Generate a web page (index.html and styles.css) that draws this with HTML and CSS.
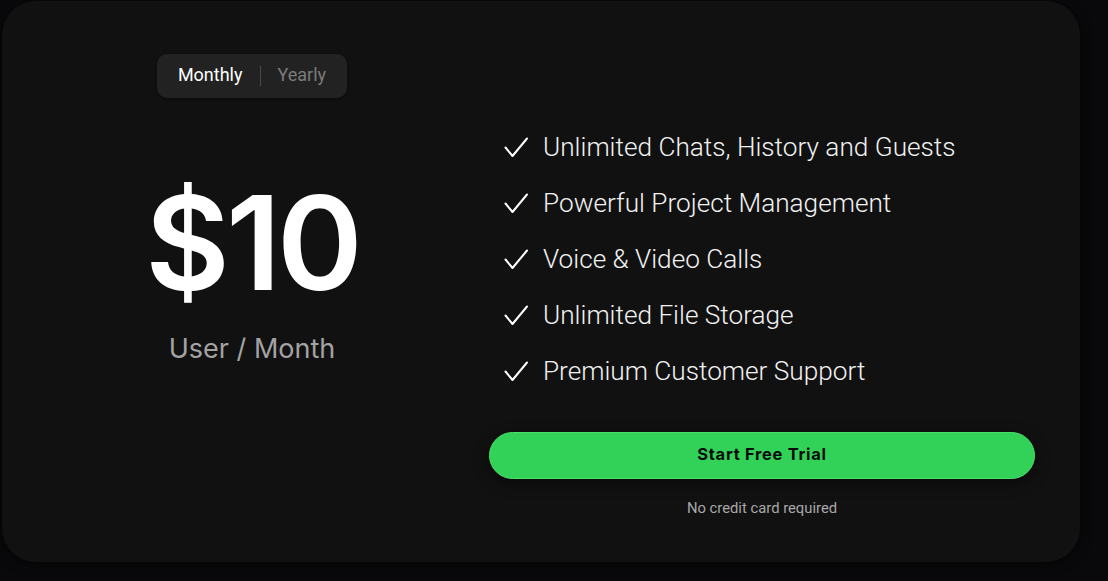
FILE: index.html
```html
<!DOCTYPE html>
<html lang="en">
<head>
<meta charset="utf-8">
<title>Pricing</title>
<link rel="stylesheet" href="styles.css">
</head>
<body>
<main class="card">
  <section class="plan">
    <div class="toggle">
      <span class="toggle-opt active">Monthly</span>
      <span class="toggle-sep"></span>
      <span class="toggle-opt">Yearly</span>
    </div>
    <div class="price">$10</div>
    <div class="per">User / Month</div>
  </section>
  <section class="details">
    <ul class="features">
      <li class="feature"><svg class="check" viewBox="0 0 24 20" width="24" height="20"><path d="M1.5 10.5 L8.5 19 L23 1.5" fill="none" stroke="#fff" stroke-width="2" stroke-linecap="round" stroke-linejoin="round"/></svg><span>Unlimited Chats, History and Guests</span></li>
      <li class="feature"><svg class="check" viewBox="0 0 24 20" width="24" height="20"><path d="M1.5 10.5 L8.5 19 L23 1.5" fill="none" stroke="#fff" stroke-width="2" stroke-linecap="round" stroke-linejoin="round"/></svg><span>Powerful Project Management</span></li>
      <li class="feature"><svg class="check" viewBox="0 0 24 20" width="24" height="20"><path d="M1.5 10.5 L8.5 19 L23 1.5" fill="none" stroke="#fff" stroke-width="2" stroke-linecap="round" stroke-linejoin="round"/></svg><span>Voice &amp; Video Calls</span></li>
      <li class="feature"><svg class="check" viewBox="0 0 24 20" width="24" height="20"><path d="M1.5 10.5 L8.5 19 L23 1.5" fill="none" stroke="#fff" stroke-width="2" stroke-linecap="round" stroke-linejoin="round"/></svg><span>Unlimited File Storage</span></li>
      <li class="feature"><svg class="check" viewBox="0 0 24 20" width="24" height="20"><path d="M1.5 10.5 L8.5 19 L23 1.5" fill="none" stroke="#fff" stroke-width="2" stroke-linecap="round" stroke-linejoin="round"/></svg><span>Premium Customer Support</span></li>
    </ul>
    <button class="cta">Start Free Trial</button>
    <p class="note">No credit card required</p>
  </section>
</main>
</body>
</html>
```

FILE: styles.css
```css
* { box-sizing: border-box; }
html, body { margin: 0; padding: 0; }
body {
  background: #09090b;
  width: 1108px;
  height: 581px;
  padding: 1px 28px 19px 2px;
  font-family: Roboto, "Noto Sans", sans-serif;
  overflow: hidden;
}
.card {
  height: 561px;
  background: #111111;
  border-radius: 34px;
  box-shadow: 0 2px 12px rgba(0,0,0,0.6);
  display: flex;
  padding: 0 45px 0 38px;
}
.plan {
  width: 424px;
  display: flex;
  flex-direction: column;
  align-items: center;
  padding-top: 53px;
}
.toggle {
  display: flex;
  align-items: center;
  background: #222222;
  border-radius: 10px;
  height: 44px;
  padding: 0 21px 3px;
  box-shadow: 0 1px 3px rgba(0,0,0,0.5);
}
.toggle-opt {
  font-size: 18px;
  color: #7c7c7c;
}
.toggle-opt.active { color: #ffffff; }
.toggle-sep {
  width: 1px;
  height: 20px;
  background: #4a4a4a;
  margin: 3px 17px 0;
}
.price {
  font-family: Inter, sans-serif;
  font-weight: 600;
  font-size: 130px;
  line-height: 1;
  letter-spacing: -4px;
  color: #ffffff;
  margin-top: 80px;
}
.per {
  font-family: Inter, sans-serif;
  font-size: 27px;
  color: #a3a3a3;
  margin-top: 24px;
}
.details {
  flex: 1;
  margin-left: 25px;
  padding-top: 126px;
  display: flex;
  flex-direction: column;
}
.features {
  list-style: none;
  margin: 0 0 0 15px;
  padding: 0;
  display: flex;
  flex-direction: column;
  gap: 16px;
}
.feature {
  display: flex;
  align-items: center;
  height: 40px;
  color: #f2f2f2;
  font-weight: 300;
  font-size: 26.2px;
}
.check { margin-right: 15px; flex: none; }
.cta {
  margin-top: 41px;
  height: 47px;
  padding: 0 0 4px;
  border-radius: 24px;
  border: 1.5px solid #49e06b;
  background: #31d257;
  color: #0b0b0b;
  font-family: Inter, sans-serif;
  font-weight: 700;
  font-size: 16.5px;
  letter-spacing: 0.7px;
  box-shadow: 0 4px 14px rgba(0,0,0,0.5);
}
.note {
  margin: 20px 0 0;
  text-align: center;
  color: #a8a8a8;
  font-size: 14.8px;
}
```
